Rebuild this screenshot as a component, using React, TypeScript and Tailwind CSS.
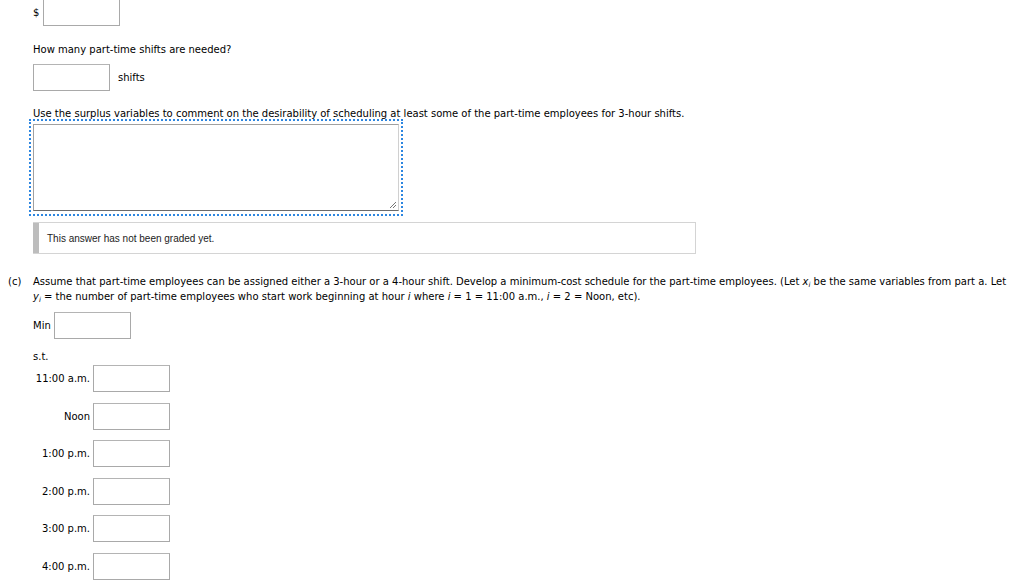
import React from "react";

const font = { fontFamily: '"DejaVu Sans", Verdana, sans-serif' };

function Box({ w = "w-[77px]" }: { w?: string }) {
  return (
    <div
      className={`${w} h-[27px] bg-white border border-[#a9a9a9] border-t-[#b4b4b4] shrink-0`}
    />
  );
}

const rows = ["11:00 a.m.", "Noon", "1:00 p.m.", "2:00 p.m.", "3:00 p.m.", "4:00 p.m."];

export default function App() {
  return (
    <div
      className="w-[1024px] h-[586px] bg-white text-black text-[10px] leading-[15px] overflow-hidden relative"
      style={font}
    >
      <div className="pl-[33px]">
        <div className="flex items-center h-[27px] -mt-[1px]">
          <span className="w-[10px]">$</span>
          <Box />
        </div>
        <div className="mt-[16px] h-[15px]">How many part-time shifts are needed?</div>
        <div className="mt-[7px] flex items-center h-[27px]">
          <Box />
          <span className="ml-[8px]">shifts</span>
        </div>
        <div className="mt-[15px] h-[15px]">
          Use the surplus variables to comment on the desirability of scheduling at least some of the part-time employees for 3-hour shifts.
        </div>
        <div className="-ml-[4px] -mt-[2px] w-[374px] h-[97px] border-2 border-dotted border-[#2d86e0] p-[3px] pl-[2px]">
          <div className="relative w-[366px] h-[87px] border border-[#a0a0a0] border-b-[#6a6a6a] border-r-[#d0d0d0] bg-white">
            <svg className="absolute right-[1px] bottom-[1px]" width="8" height="8" viewBox="0 0 8 8">
              <path d="M7 1 L1 7 M7 4 L4 7" stroke="#777" strokeWidth="1" />
            </svg>
          </div>
        </div>
        <div className="mt-[6px] w-[663px] h-[32px] flex border border-[#d4d4d4] border-l-0">
          <div className="w-[6px] bg-[#bdbdbd] shrink-0" />
          <div
            className="pl-[8px] flex items-center text-[10px] text-[#222]"
            style={{ fontFamily: '"Liberation Sans", Arial, sans-serif' }}
          >
            This answer has not been graded yet.
          </div>
        </div>
      </div>

      <div className="mt-[20px] flex pl-[8px]">
        <div className="w-[25px] shrink-0">(c)</div>
        <div className="w-[975px]">
          Assume that part-time employees can be assigned either a 3-hour or a 4-hour shift. Develop a minimum-cost schedule for the part-time employees. (Let{" "}
          <i>x</i>
          <sub className="text-[7px] italic">i</sub> be the same variables from part a. Let{" "}
          <i>y</i>
          <sub className="text-[7px] italic">i</sub> = the number of part-time employees who start work beginning at hour <i>i</i> where <i>i</i> = 1 = 11:00 a.m., <i>i</i> = 2 = Noon, etc).
        </div>
      </div>

      <div className="pl-[33px]">
        <div className="mt-[8px] flex items-center h-[27px]">
          <span className="w-[21px]">Min</span>
          <Box />
        </div>
        <div className="mt-[10px] h-[15px]">s.t.</div>
        <div className="mt-[1px] flex flex-col gap-[10.6px]">
          {rows.map((r) => (
            <div key={r} className="flex items-center h-[27px]">
              <span className="w-[60px] pr-[3px] text-right whitespace-nowrap">{r}</span>
              <Box />
            </div>
          ))}
        </div>
      </div>
    </div>
  );
}
